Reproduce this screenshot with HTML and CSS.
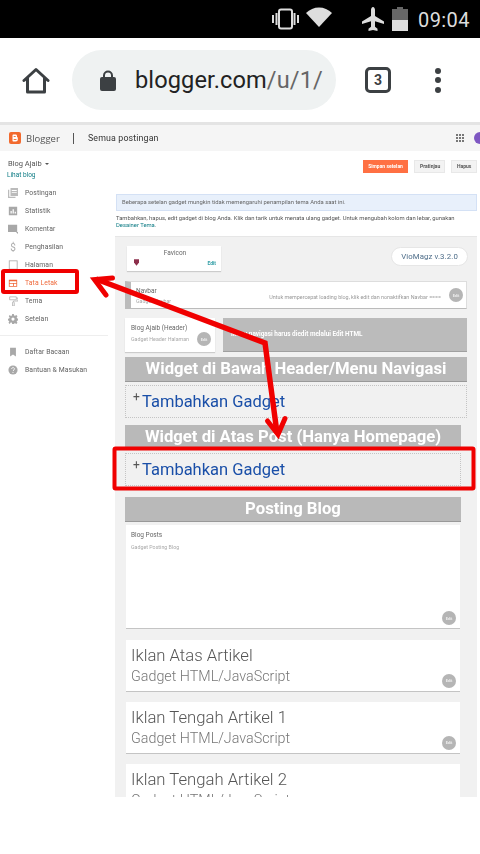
FILE: index.html
```html
<!DOCTYPE html>
<html lang="id">
<head>
<meta charset="utf-8">
<title>Blogger - Tata Letak</title>
<link rel="stylesheet" href="styles.css">
</head>
<body>
<div class="phone">
  <div class="status">
    <svg class="st-vib" viewBox="0 0 27 22"><rect x="7" y="1.500" width="13" height="19" rx="2" fill="none" stroke="#ddd" stroke-width="2"/><rect x="0" y="7" width="2" height="8" fill="#ddd"/><rect x="3.500" y="5" width="2" height="12" fill="#ddd"/><rect x="21.500" y="5" width="2" height="12" fill="#ddd"/><rect x="25" y="7" width="2" height="8" fill="#ddd"/></svg>
    <svg class="st-wifi" viewBox="0 0 26 20"><path d="M0 6C7-1.500 19-1.500 26 6L13 20Z" fill="#ddd"/></svg>
    <svg class="st-plane" viewBox="0 0 22 24"><path d="M11 0c1.200 0 2 1.500 2 3v6l9 5.500v2.500l-9-2.800v5.500l2.500 2V24L11 23l-4.500 1v-2.300l2.500-2v-5.500L0 17v-2.500L9 9V3c0-1.500.8-3 2-3z" fill="#ddd"/></svg>
    <svg class="st-bat" viewBox="0 0 16 24"><path d="M5 0h6v2h5v11H0V2h5z" fill="#666"/><rect y="13" width="16" height="11" fill="#ddd"/></svg>
    <span class="st-time">09:04</span>
  </div>
  <div class="toolbar">
    <svg class="home" viewBox="0 0 28 28"><path d="M2 13.500 14 2.500l12 11M5.500 11v14h17V11" fill="none" stroke="#3c4043" stroke-width="3" stroke-linejoin="round" stroke-linecap="round"/></svg>
    <div class="pill">
      <svg class="lock" viewBox="0 0 16 21"><path d="M4 8V5.500a4 4 0 0 1 8 0V8" fill="none" stroke="#3c4043" stroke-width="2"/><rect y="7" width="16" height="14" rx="2" fill="#3c4043"/></svg>
      <span class="url"><b class="host">blogger.com</b>/u/1/</span>
    </div>
    <div class="tabs">3</div>
    <div class="dots"><i></i><i></i><i></i></div>
  </div>
  <div class="shot">
    <header class="bhead">
      <svg class="blogo" viewBox="0 0 12 12"><rect width="12" height="12" rx="2" fill="#f26a2e"/><path d="M3.500 3.500c0-.6.400-1 1-1h2c1 0 1.500.6 1.500 1.500v1c.5 0 .8.300.8 1v1.500c0 1-.7 2-2 2H4.500c-.6 0-1-.4-1-1z" fill="#fff"/><rect x="4.700" y="4" width="2" height=".9" fill="#f26a2e"/><rect x="4.700" y="7" width="2.800" height=".9" fill="#f26a2e"/></svg>
      <span class="bname">Blogger</span>
      <span class="bsep"></span>
      <span class="bcrumb">Semua postingan</span>
      <span class="bgrid"><i></i><i></i><i></i><i></i><i></i><i></i><i></i><i></i><i></i></span>
      <span class="bavatar"></span>
    </header>
    <div class="bbody">
      <nav class="side">
        <div class="blogname">Blog Ajaib <span class="caret"></span></div>
        <div class="viewblog">Lihat blog</div>
        <ul class="menu">
          <li class="mitem"><svg viewBox="0 0 12 12"><path d="M0 2h1.500v8.500H9V12H0zM3 0h9v9.500H3zM4.500 2.500v1h6v-1zM4.500 5v1h6V5z" fill="#bbb" fill-rule="evenodd"/></svg>Postingan</li>
          <li class="mitem"><svg viewBox="0 0 12 12"><path d="M1 1h10v10H1zM3 6v3h1.500V6zM5.500 4v5H7V4zM8 7v2h1.500V7z" fill="#a8a8a8" fill-rule="evenodd"/></svg>Statistik</li>
          <li class="mitem"><svg viewBox="0 0 12 12"><path d="M0 1h11v8.500h1V12L9.500 9.500H0z" fill="#a8a8a8"/></svg>Komentar</li>
          <li class="mitem"><span class="dollar">$</span>Penghasilan</li>
          <li class="mitem"><svg viewBox="0 0 12 12"><rect x="1.500" y="1" width="9.500" height="10" fill="none" stroke="#aaa" stroke-width="1"/></svg>Halaman</li>
          <li class="mitem mactive"><svg viewBox="0 0 12 12"><path d="M1 2h10v8.500H1zM2 4v5.500h4V7H2zM7 7v2.500h3V7zM2 4h8v2H2z" fill="#ef6a3c" fill-rule="evenodd"/></svg>Tata Letak</li>
          <li class="mitem"><svg viewBox="0 0 12 12"><path d="M2 1h8v3.500H2zM10.500 2.500H12V6H6.500v1.500h-1v4.500h2V7.500" fill="none" stroke="#aaa" stroke-width=".9"/></svg>Tema</li>
          <li class="mitem"><svg viewBox="0 0 12 12"><path d="M5 0h2l.3 1.700 1.200.5L10 1.300l1.400 1.400-1 1.400.6 1.200 1.700.3v2L11 8l-.6 1.200 1 1.400-1.400 1.400-1.500-1-1.200.5L7 12H5l-.3-1.500-1.200-.5L2 11.900.6 10.500l1-1.400L1 8l-1-.3v-2l1.400-.3.6-1.300-1-1.400L2 1.300l1.500 1L4.700 1.700zM6 4.200a1.900 1.900 0 1 0 0 3.800 1.900 1.900 0 0 0 0-3.800z" fill="#a8a8a8" fill-rule="evenodd"/></svg>Setelan</li>
        </ul>
        <div class="sdiv"></div>
        <ul class="menu">
          <li class="mitem"><svg viewBox="0 0 12 12"><path d="M2.500 1h7v10.500L6 9l-3.500 2.500z" fill="#a8a8a8"/></svg>Daftar Bacaan</li>
          <li class="mitem"><svg viewBox="0 0 12 12"><circle cx="6" cy="6" r="5.500" fill="#a8a8a8"/><path d="M4.300 4.800c0-2.200 3.500-2.200 3.500-.1 0 1.300-1.700 1.300-1.700 2.600" fill="none" stroke="#fff" stroke-width="1"/><circle cx="6" cy="9" r=".7" fill="#fff"/></svg>Bantuan &amp; Masukan</li>
        </ul>
      </nav>
      <main class="content">
        <div class="actions">
          <span class="btn btn-save">Simpan setelan</span>
          <span class="btn">Pratinjau</span>
          <span class="btn">Hapus</span>
        </div>
        <div class="notice">Beberapa setelan gadget mungkin tidak memengaruhi penampilan tema Anda saat ini.</div>
        <p class="desc">Tambahkan, hapus, edit gadget di blog Anda. Klik dan tarik untuk menata ulang gadget. Untuk mengubah kolom dan lebar, gunakan <span class="teal">Desainer Tema</span>.</p>
        <section class="panel">
          <div class="row-top">
            <div class="favcard">
              <div class="favtitle">Favicon</div>
              <div class="favfoot"><svg class="favic" viewBox="0 0 6 8"><path d="M0 0h6v4L3 8 0 4z" fill="#8d2f4c"/></svg><span class="favedit">Edit</span></div>
            </div>
            <div class="version">VioMagz v.3.2.0</div>
          </div>
          <div class="navbar">
            <div class="navtext"><div class="w-title">Navbar</div><div class="w-sub">Gadget Navbar</div></div>
            <div class="navnote">Untuk mempercepat loading blog, klik edit dan nonaktifkan Navbar ====</div>
            <span class="editc">Edit</span>
          </div>
          <div class="row-head">
            <div class="headcard">
              <div class="w-title">Blog Ajaib (Header)</div>
              <div class="headfoot"><div class="w-sub">Gadget Header Halaman</div><span class="editc">Edit</span></div>
            </div>
            <div class="menubox">Menu navigasi harus diedit melalui Edit HTML</div>
          </div>
          <div class="bar">Widget di Bawah Header/Menu Navigasi</div>
          <div class="addbox"><span class="plus">+</span><span class="addlink">Tambahkan Gadget</span></div>
          <div class="narrow">
            <div class="bar bar-2">Widget di Atas Post (Hanya Homepage)</div>
            <div class="addbox addbox-2"><span class="plus">+</span><span class="addlink">Tambahkan Gadget</span></div>
            <div class="bar bar-3">Posting Blog</div>
            <div class="card card-posts">
              <div class="w-title">Blog Posts</div>
              <div class="w-sub w-sub-low">Gadget Posting Blog</div>
              <span class="editc editc-abs">Edit</span>
            </div>
            <div class="card card-ad">
              <div class="ad-title">Iklan Atas Artikel</div>
              <div class="ad-sub">Gadget HTML/JavaScript</div>
              <span class="editc editc-abs">Edit</span>
            </div>
            <div class="card card-ad">
              <div class="ad-title">Iklan Tengah Artikel 1</div>
              <div class="ad-sub">Gadget HTML/JavaScript</div>
              <span class="editc editc-abs">Edit</span>
            </div>
            <div class="card card-ad">
              <div class="ad-title">Iklan Tengah Artikel 2</div>
              <div class="ad-sub">Gadget HTML/JavaScript</div>
            </div>
          </div>
        </section>
      </main>
    </div>
    <svg class="annot" viewBox="0 0 480 675">
      <rect x="3" y="149" width="74" height="21" fill="none" stroke="#f00000" stroke-width="4" rx="1"/>
      <rect x="114.500" y="326.500" width="359" height="40" fill="none" stroke="#f00000" stroke-width="4" rx="1"/>
      <path d="M96 157 265 221 277 311" fill="none" stroke="#f00000" stroke-width="5.500" stroke-linejoin="miter"/>
      <path d="M112.500 156 94.500 157.500 106 173" fill="none" stroke="#f00000" stroke-width="5" stroke-linecap="round" stroke-linejoin="miter"/>
      <path d="M267.500 299 278 312.500 285 296.500" fill="none" stroke="#f00000" stroke-width="5" stroke-linecap="round" stroke-linejoin="miter"/>
    </svg>
  </div>
</div>
</body>
</html>
```
FILE: styles.css
```css
* { box-sizing: border-box; }
html, body { margin: 0; padding: 0; background: #fff; }
body { font-family: Roboto, "Liberation Sans", sans-serif; }
ul { list-style: none; margin: 0; padding: 0; }
.phone { width: 480px; height: 854px; overflow: hidden; background: #fff; display: flex; flex-direction: column; }

.status { height: 38px; background: #000; display: flex; align-items: center; flex: none; }
.st-vib { width: 27px; height: 22px; margin-left: 272px; }
.st-wifi { width: 26px; height: 20px; margin-left: 7px; margin-top: -4px; }
.st-plane { width: 22px; height: 24px; margin-left: 30px; }
.st-bat { width: 16px; height: 24px; margin-left: 8px; }
.st-time { color: #ddd; font-size: 20px; margin-left: 10px; margin-top: 2px; letter-spacing: .4px; }

.toolbar { height: 84px; flex: none; background: #fff; display: flex; align-items: center; }
.home { width: 28px; height: 28px; margin-left: 22px; margin-top: 2px; }
.pill { width: 264px; height: 60px; margin-left: 22px; border-radius: 30px; background: #eff2f2; display: flex; align-items: center; overflow: hidden; padding-left: 28px; }
.lock { width: 16px; height: 21px; flex: none; }
.url { margin-left: 19px; white-space: nowrap; font-size: 23.600px; color: #666; letter-spacing: .1px; }
.host { font-weight: 400; color: #222; }
.tabs { width: 26px; height: 26px; margin-left: 29px; border: 3px solid #3c4043; border-radius: 5px; display: flex; align-items: center; justify-content: center; font-size: 14px; font-weight: 700; color: #3c4043; }
.dots { display: flex; flex-direction: column; gap: 3.500px; margin-left: 44px; }
.dots i { display: block; width: 6px; height: 6px; border-radius: 50%; background: #3c4043; }

.shot { position: relative; height: 675px; flex: none; overflow: hidden; background: #fff; filter: blur(.4px); }

.bhead { height: 29px; background: #f5f5f5; border-top: 3px solid #e4e4e4; display: flex; align-items: center; padding-left: 9px; }
.blogo { width: 12px; height: 12px; }
.bname { font-size: 9.500px; color: #555; margin-left: 5px; font-family: "Open Sans", sans-serif; width: 47px; }
.bsep { width: 1px; height: 11px; background: #555; }
.bcrumb { font-size: 8.800px; color: #333; margin-left: 14px; letter-spacing: .15px; }
.bgrid { margin-left: auto; display: grid; grid-template-columns: repeat(3, 2px); gap: 1px; }
.bgrid i { display: block; width: 2px; height: 2px; background: #777; }
.bavatar { width: 12px; height: 12px; border-radius: 50%; background: #7e57c2; margin-left: 10px; margin-right: -6px; }

.bbody { display: flex; height: 646px; }
.side { width: 115px; flex: none; padding-top: 7px; }
.blogname { font-size: 7.500px; color: #555; padding-left: 8px; height: 11px; line-height: 11px; display: flex; align-items: center; gap: 3px; }
.caret { width: 0; height: 0; border-left: 2.500px solid transparent; border-right: 2.500px solid transparent; border-top: 2.500px solid #555; }
.viewblog { font-size: 6.500px; color: #0d7b84; padding-left: 7px; margin-top: 2px; height: 9px; line-height: 9px; }
.menu { margin-top: 4px; }
.mitem { height: 18px; display: flex; align-items: center; font-size: 6.800px; color: #616161; padding-left: 8px; letter-spacing: .1px; white-space: nowrap; }
.mitem svg { width: 10px; height: 10px; margin-right: 7px; flex: none; }
.dollar { width: 10px; margin-right: 7px; text-align: center; font-size: 10px; color: #aaa; }
.mactive { color: #ef6a3c; }
.sdiv { height: 1px; background: #eee; width: 108px; margin-top: 7px; margin-bottom: 7px; }

.content { flex: 1; padding-right: 3px; min-width: 0; }
.actions { display: flex; justify-content: flex-end; gap: 6px; padding-top: 9px; height: 43px; }
.btn { height: 13px; background: #f3f3f3; border: 1px solid #e8e8e8; font-size: 5px; font-weight: 700; color: #555; padding: 0 5px; line-height: 11px; }
.btn:nth-child(2) { width: 31px; }
.btn:nth-child(3) { width: 26px; }
.btn-save { width: 45px; background: #ff7043; border-color: #ff7043; color: #fff; padding: 0; text-align: center; }
.notice { margin-left: 1px; height: 17px; background: #e8f0fb; border: 1px solid #d4e1f5; font-size: 5.850px; color: #666; line-height: 15px; padding-left: 5px; }
.desc { margin: 4px 0 0 1px; font-size: 5.850px; line-height: 7px; color: #555; height: 21px; }
.teal { color: #0d7b84; }

.panel { background: #f1f1f1; height: 600px; padding: 9px 10px 0; border-top: 1px solid #e6e6e6; }
.row-top { display: flex; justify-content: space-between; align-items: flex-start; padding-left: 2px; height: 35px; }
.favcard { width: 94px; height: 25px; background: #fff; box-shadow: 0 1px 1px #ccc; padding: 3px 5px 0 7px; }
.favtitle { font-size: 6.500px; line-height: 8px; color: #666; text-align: center; }
.favfoot { display: flex; justify-content: space-between; align-items: center; margin-top: 2px; }
.favic { width: 5px; height: 7px; }
.favedit { font-size: 5px; color: #35a0a8; font-weight: 700; }
.version { width: 77px; height: 19px; margin-top: 1px; border-radius: 10px; background: #fff; border: 1px solid #e6e6e6; font-size: 7.800px; line-height: 17px; text-align: center; color: #4e6d89; letter-spacing: .1px; margin-right: -1px; }

.navbar { height: 28px; width: 342px; background: #fff; border-left: 6px solid #bbb; border-top: 1px solid #ddd; border-bottom: 1px solid #bbb; border-right: 1px solid #ddd; display: flex; align-items: center; padding-left: 5px; }
.navtext { flex: none; width: 120px; align-self: flex-start; margin-top: 5px; }
.navtext .w-sub { margin-top: 2px; }
.navnote { flex: 1; font-size: 5.400px; color: #999; white-space: nowrap; margin-right: 8px; text-align: right; margin-top: 3px; }
.w-title { font-size: 6.500px; line-height: 9px; color: #666; }
.w-sub { font-size: 5.300px; line-height: 7px; color: #aaa; margin-top: 5px; }
.card .w-sub-low { margin-top: 4px; }
.editc { width: 14px; height: 14px; flex: none; border-radius: 50%; background: #b5b5b5; color: #eee; font-size: 3.800px; font-weight: 700; display: flex; align-items: center; justify-content: center; }
.navbar .editc { margin-right: 3px; }

.row-head { display: flex; gap: 8px; margin-top: 9px; height: 34px; }
.headcard { width: 90px; background: #fff; box-shadow: 0 1px 1px #ccc; padding: 6px 4px 0 6px; }
.headfoot { display: flex; justify-content: space-between; align-items: flex-end; margin-top: -1px; }
.headfoot .w-sub { margin-top: 0; margin-bottom: 3px; }
.menubox { width: 244px; background: #bbb; border-bottom: 1px solid #a0a0a0; color: #fff; font-size: 6.400px; font-weight: 700; line-height: 33px; padding-left: 8px; white-space: nowrap; }

.bar { height: 25px; width: 342px; margin-top: 5px; background: #b9b9b9; border-bottom: 1px solid #999; color: #fff; font-size: 16.700px; font-weight: 700; line-height: 24px; text-align: center; white-space: nowrap; }
.addbox { height: 33px; width: 342px; margin-top: 3px; border: 1px dotted #c4c4c4; display: flex; align-items: flex-start; padding-left: 7px; }
.plus { font-size: 12px; line-height: 12px; color: #555; margin-top: 5px; width: 9px; }
.addlink { font-size: 16.500px; line-height: 22px; color: #1a4fa8; margin-top: 5px; }

.narrow { width: 336px; }
.bar-2 { width: 336px; margin-top: 7px; height: 25px; }
.addbox-2 { width: 336px; margin-top: 3px; }
.bar-3 { width: 336px; margin-top: 11px; height: 25px; }
.card { position: relative; background: #fff; margin-left: 1px; width: 334px; border-bottom: 1px solid #c4c4c4; }
.card-posts { height: 104px; margin-top: 3px; padding: 5px 5px 0; }
.card-posts .w-title { margin-top: 1px; }
.card-ad { height: 51.500px; margin-top: 10.500px; padding: 6px 5px 0; }
.card-posts + .card-ad { margin-top: 11px; }
.ad-title { font-size: 16.700px; line-height: 19px; color: #555; font-weight: 300; }
.ad-sub { font-size: 14.300px; line-height: 18px; color: #777; font-weight: 300; margin-top: 2px; }
.editc-abs { position: absolute; right: 4px; bottom: 3px; }

.annot { position: absolute; left: 0; top: 0; width: 480px; height: 675px; pointer-events: none; }
```
